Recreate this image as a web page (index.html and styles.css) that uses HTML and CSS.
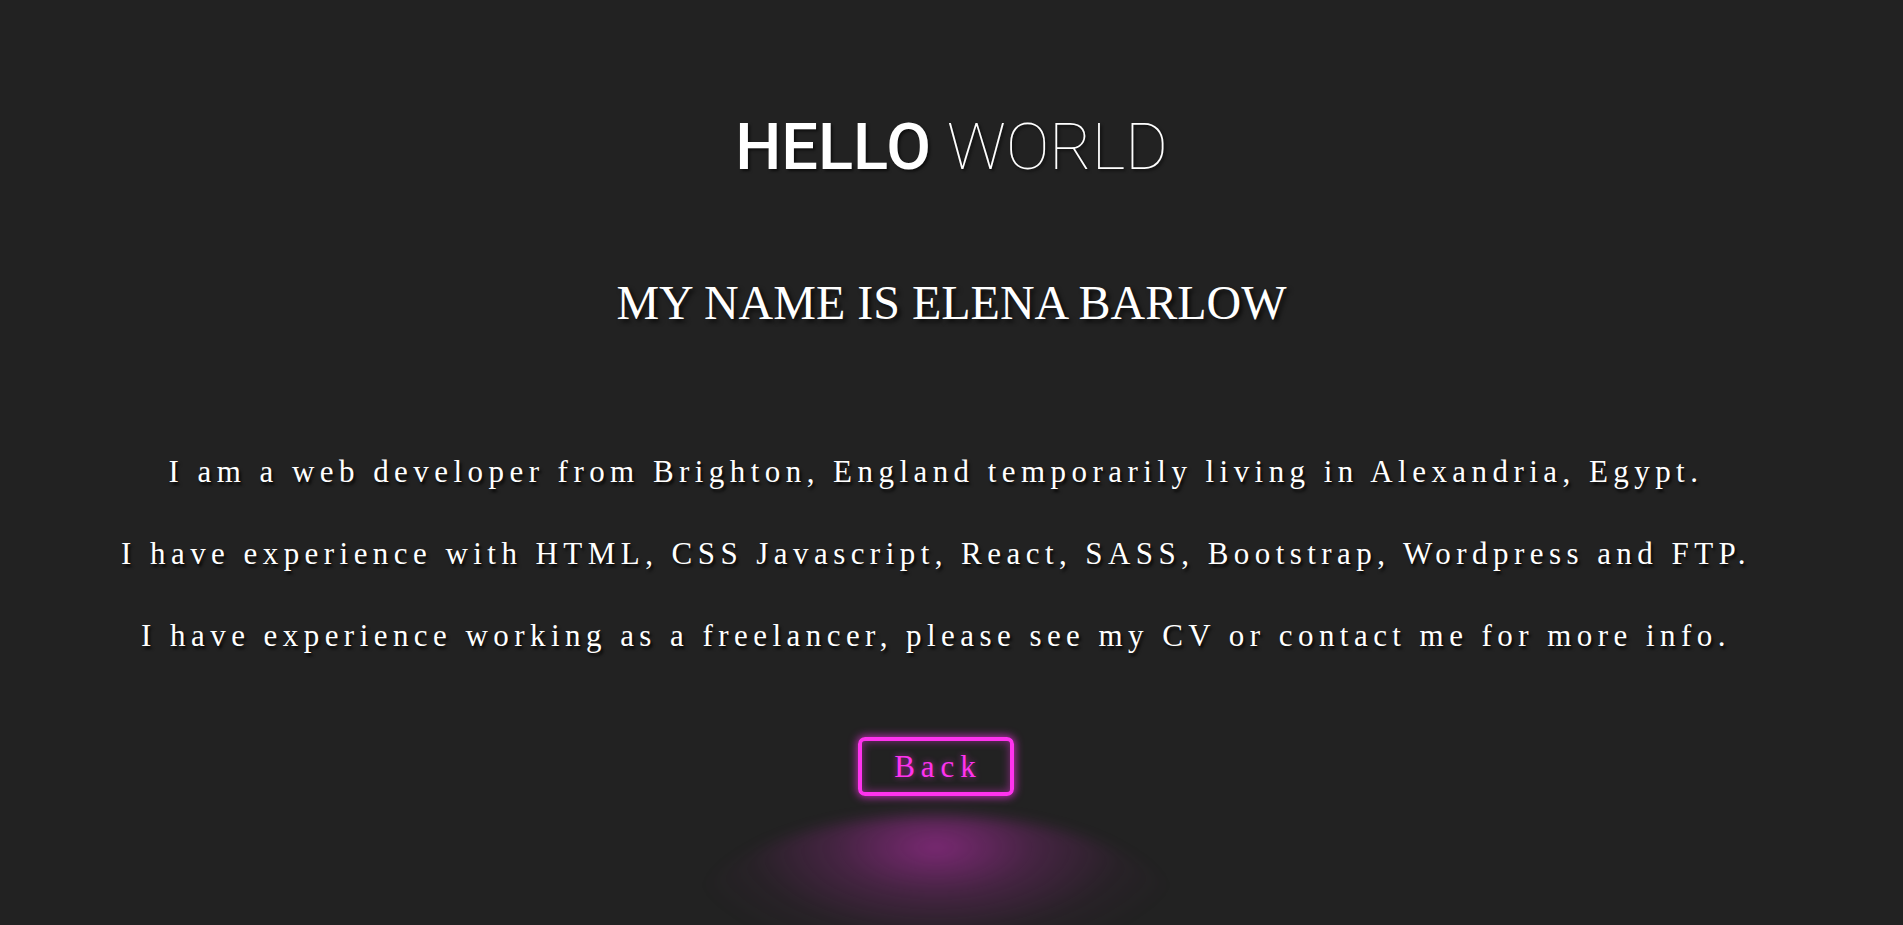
FILE: index.html
```html
<!DOCTYPE html>
<html lang="en">
<head>
<meta charset="utf-8">
<title>Elena Barlow</title>
<link rel="stylesheet" href="styles.css">
</head>
<body>
<main class="page">
  <h1 class="title"><span class="title-bold">HELLO</span> <span class="title-thin">WORLD</span></h1>
  <h2 class="name">MY NAME IS ELENA BARLOW</h2>
  <div class="lower">
    <section class="about">
      <p class="about-line">I am a web developer from Brighton, England temporarily living in Alexandria, Egypt.</p>
      <p class="about-line">I have experience with HTML, CSS Javascript, React, SASS, Bootstrap, Wordpress and FTP.</p>
      <p class="about-line">I have experience working as a freelancer, please see my CV or contact me for more info.</p>
    </section>
    <div class="back-wrap">
      <a class="back-btn" href="#">Back</a>
      <div class="back-glow"></div>
    </div>
  </div>
</main>
</body>
</html>
```
FILE: styles.css
```css
html, body {
  margin: 0;
  padding: 0;
  height: 100%;
}
body {
  background: #222222;
  color: #ffffff;
  overflow: hidden;
}
.page {
  display: flex;
  flex-direction: column;
  align-items: center;
  padding-top: 115px;
  height: 100%;
  box-sizing: border-box;
}
.title {
  margin: 0;
  font-family: Roboto, "Noto Sans", sans-serif;
  font-size: 65px;
  line-height: 1;
  font-weight: 400;
  text-shadow: 2px 2px 3px rgba(0,0,0,0.6);
}
.title-bold { font-weight: 500; }
.title-thin { font-weight: 100; }
.name {
  margin: 99px 0 0;
  font-family: "Liberation Serif", "Times New Roman", serif;
  font-weight: 400;
  font-size: 48px;
  line-height: 1;
  text-shadow: 3px 3px 4px rgba(0,0,0,0.7);
}
.lower {
  display: flex;
  flex-direction: column;
  align-items: center;
  align-self: stretch;
  padding-right: 31px;
}
.about {
  margin-top: 129px;
  display: flex;
  flex-direction: column;
  align-items: center;
  gap: 51px;
}
.about-line {
  margin: 0;
  font-family: "Liberation Serif", "Times New Roman", serif;
  font-size: 31px;
  line-height: 1;
  letter-spacing: 5.45px;
  white-space: nowrap;
  text-shadow: 2px 3px 3px rgba(0,0,0,0.8);
}
.back-wrap {
  margin-top: 86px;
  position: relative;
}
.back-btn {
  display: flex;
  align-items: center;
  justify-content: center;
  box-sizing: border-box;
  width: 156px;
  height: 59px;
  padding-left: 4px;
  border: 4px solid #ff33ee;
  border-radius: 7px;
  color: #ff33ee;
  text-decoration: none;
  font-family: "Liberation Serif", "Times New Roman", serif;
  font-size: 31px;
  letter-spacing: 6px;
  text-shadow: 0 0 6px rgba(255,51,238,0.6);
  box-shadow: 0 0 8px 1px rgba(255,51,238,0.7), inset 0 0 10px rgba(255,51,238,0.45);
}
.back-glow {
  position: absolute;
  left: 50%;
  top: 78px;
  width: 500px;
  height: 230px;
  transform: translateX(-50%);
  border-radius: 50%;
  background: radial-gradient(ellipse 50% 50% at 50% 14%, rgba(255,51,238,0.4) 0%, rgba(210,45,195,0.2) 40%, rgba(120,30,110,0.07) 75%, rgba(34,34,34,0) 100%);
  filter: blur(7px);
  pointer-events: none;
}
```
